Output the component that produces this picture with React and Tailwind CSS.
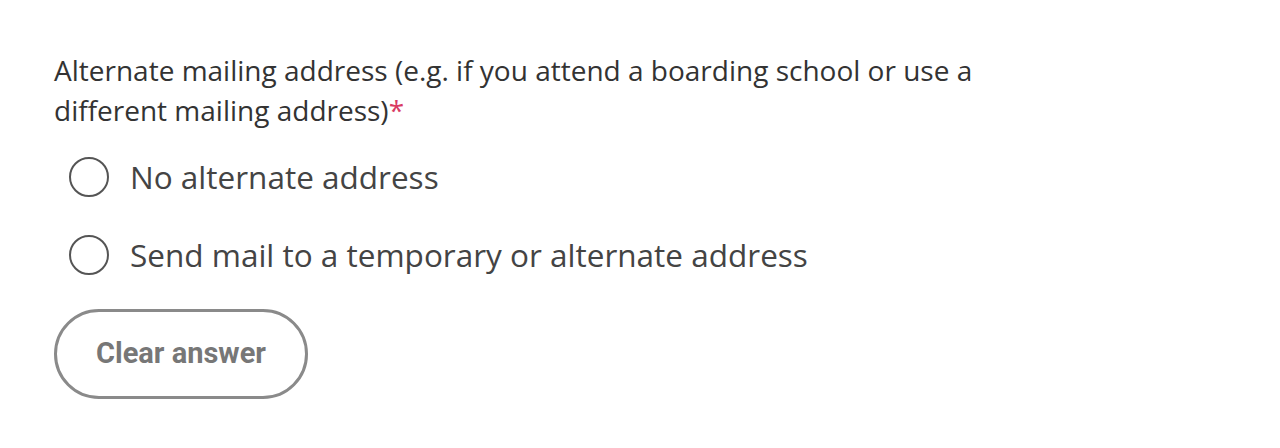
import React, { useState } from 'react';

const options = [
  { id: 'none', label: 'No alternate address' },
  { id: 'alt', label: 'Send mail to a temporary or alternate address' },
];

export default function App() {
  const [choice, setChoice] = useState(null);

  return (
    <div className="min-h-[448px] bg-white pl-[54px] pt-[50px] font-['Open_Sans',sans-serif]">
      {/* Question label */}
      <p className="w-[1000px] text-[28px] leading-[40px] text-[#333]">
        Alternate mailing address (e.g. if you attend a boarding school or use a different mailing address)
        <span className="text-[#d93a63]">*</span>
      </p>

      {/* Radio options */}
      <div className="mt-[8px] flex flex-col">
        {options.map((opt) => (
          <label key={opt.id} className="flex h-[78px] cursor-pointer items-center gap-[21px] pl-[15px]">
            <span className="flex h-[40px] w-[40px] shrink-0 items-center justify-center rounded-full border-2 border-[#555]">
              {choice === opt.id && <span className="h-[20px] w-[20px] rounded-full bg-[#555]" />}
            </span>
            <input
              type="radio"
              name="alt-address"
              className="hidden"
              checked={choice === opt.id}
              onChange={() => setChoice(opt.id)}
            />
            <span className="text-[31.5px] text-[#444]">{opt.label}</span>
          </label>
        ))}
      </div>

      {/* Clear answer */}
      <button
        onClick={() => setChoice(null)}
        className="mt-[15px] flex h-[90px] w-[254px] items-center justify-center rounded-full border-[3px] border-[#8a8a8a] font-['Roboto',sans-serif] text-[29px] font-bold text-[#777]"
      >
        Clear answer
      </button>
    </div>
  );
}
